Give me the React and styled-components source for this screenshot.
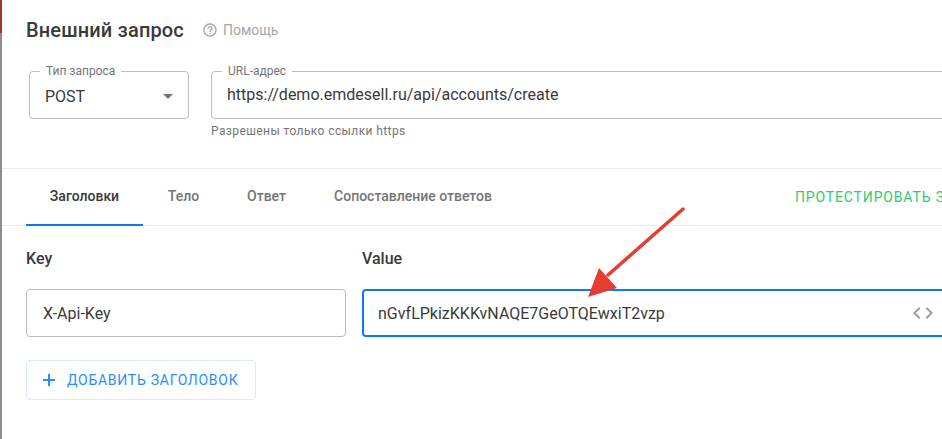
import React from 'react';
import styled, { createGlobalStyle } from 'styled-components';

const GlobalStyle = createGlobalStyle`
  html, body {
    margin: 0;
    padding: 0;
    background: #fff;
    overflow: hidden;
  }
  * { box-sizing: border-box; }
`;

const Screen = styled.div`
  position: relative;
  width: 942px;
  height: 439px;
  overflow: hidden;
  display: flex;
  font-family: Roboto, "Liberation Sans", sans-serif;
  color: #333;
  background: #fff;
`;

const Edge = styled.div`
  flex: 0 0 2px;
  background: linear-gradient(#a83232 0 33px, #8c8c8c 33px);
`;

const Panel = styled.div`
  flex: 0 0 1100px;
  display: flex;
  flex-direction: column;
`;

const Top = styled.div`
  padding: 18px 24px 0;
  height: 150px;
  border-bottom: 1px solid #ededed;
  box-sizing: content-box;
`;

const TitleRow = styled.div`
  display: flex;
  align-items: center;
  gap: 18px;
  height: 24px;
`;

const Title = styled.h1`
  margin: 0;
  font-size: 20px;
  font-weight: 500;
  letter-spacing: 0.15px;
  color: #3a3a3a;
`;

const Help = styled.span`
  display: flex;
  align-items: center;
  gap: 5px;
  font-size: 14px;
  color: #a6a6a6;
`;

const FieldRow = styled.div`
  display: flex;
  gap: 22px;
  margin: 29px 0 0 3px;
`;

const Outlined = styled.div`
  position: relative;
  width: ${(p) => p.$width}px;
  height: 48px;
  border: 1px solid #bdbdbd;
  border-radius: 4px;
  display: flex;
  align-items: center;
  justify-content: space-between;
  padding: ${(p) => (p.$raised ? '0 15px 2px' : '3px 15px 0')};
  font-size: 16px;
  color: #3a3a3a;
`;

const Legend = styled.span`
  position: absolute;
  top: -7px;
  left: 10px;
  padding: 0 6px;
  background: #fff;
  font-size: 12px;
  line-height: 13px;
  color: #757575;
`;

const Caret = styled.span`
  width: 0;
  height: 0;
  border-left: 5px solid transparent;
  border-right: 5px solid transparent;
  border-top: 5px solid #757575;
`;

const Hint = styled.div`
  margin: 5px 0 0 185px;
  font-size: 12px;
  line-height: 14px;
  letter-spacing: 0.4px;
  color: #757575;
`;

const Tabs = styled.div`
  height: 57px;
  padding: 0 24px;
  border-bottom: 1px solid #ededed;
  display: flex;
  align-items: stretch;
`;

const Tab = styled.div`
  display: flex;
  align-items: center;
  justify-content: center;
  width: ${(p) => p.$width}px;
  margin-bottom: -1px;
  padding-bottom: 1px;
  font-size: 14px;
  font-weight: 500;
  color: ${(p) => (p.$active ? '#3a3a3a' : '#757575')};
  border-bottom: 2px solid ${(p) => (p.$active ? '#0a7cf0' : 'transparent')};
`;

const TestAction = styled.div`
  margin-left: 278px;
  align-self: center;
  font-size: 14px;
  letter-spacing: 0.85px;
  color: #2ecc71;
  white-space: nowrap;
`;

const Headers = styled.div`
  padding: 24px 24px 0;
`;

const HeaderGrid = styled.div`
  display: grid;
  grid-template-columns: 320px 600px;
  column-gap: 16px;
  row-gap: 21px;
`;

const ColumnLabel = styled.div`
  font-size: 16px;
  font-weight: 500;
  line-height: 18px;
  color: #3a3a3a;
`;

const TextBox = styled.div`
  height: 48px;
  border: ${(p) => (p.$focused ? '2px solid #0a7cf0' : '1px solid #bdbdbd')};
  border-radius: 4px;
  display: flex;
  align-items: center;
  padding: 0 ${(p) => (p.$focused ? '14px' : '16px')};
  font-size: 16px;
  color: #3a3a3a;
`;

const CodeMark = styled.svg`
  margin-left: 246px;
  flex: none;
`;

const AddButton = styled.button`
  display: flex;
  align-items: center;
  gap: 11px;
  margin-top: 23px;
  height: 40px;
  width: 230px;
  padding: 0 15px;
  background: #fff;
  border: 1px solid #d6e9ff;
  border-radius: 4px;
  font-family: inherit;
  font-size: 14px;
  font-weight: 400;
  letter-spacing: 0.73px;
  white-space: nowrap;
  color: #2b8ff5;
`;

const PlusMark = styled.svg`
  flex: none;
`;

const Arrow = styled.svg`
  position: absolute;
  left: 580px;
  top: 200px;
  pointer-events: none;
`;

export default function App() {
  return (
    <>
      <GlobalStyle />
      <Screen>
        <Edge />
        <Panel>
          <Top>
            <TitleRow>
              <Title>Внешний запрос</Title>
              <Help>
                <svg width="16" height="16" viewBox="0 0 24 24" fill="#a6a6a6">
                  <path d="M11 18h2v-2h-2v2zm1-16C6.48 2 2 6.48 2 12s4.48 10 10 10 10-4.48 10-10S17.52 2 12 2zm0 18c-4.41 0-8-3.59-8-8s3.59-8 8-8 8 3.59 8 8-3.59 8-8 8zm0-14c-2.21 0-4 1.79-4 4h2c0-1.1.9-2 2-2s2 .9 2 2c0 2-3 1.75-3 5h2c0-2.25 3-2.5 3-5 0-2.21-1.79-4-4-4z" />
                </svg>
                Помощь
              </Help>
            </TitleRow>
            <FieldRow>
              <Outlined $width={160}>
                <Legend>Тип запроса</Legend>
                POST
                <Caret />
              </Outlined>
              <Outlined $width={800} $raised>
                <Legend>URL-адрес</Legend>
                https://demo.emdesell.ru/api/accounts/create
              </Outlined>
            </FieldRow>
            <Hint>Разрешены только ссылки https</Hint>
          </Top>
          <Tabs>
            <Tab $active $width={117}>Заголовки</Tab>
            <Tab $width={81}>Тело</Tab>
            <Tab $width={85}>Ответ</Tab>
            <Tab $width={208}>Сопоставление ответов</Tab>
            <TestAction>ПРОТЕСТИРОВАТЬ ЗАПРОС</TestAction>
          </Tabs>
          <Headers>
            <HeaderGrid>
              <ColumnLabel>Key</ColumnLabel>
              <ColumnLabel>Value</ColumnLabel>
              <TextBox>X-Api-Key</TextBox>
              <TextBox $focused>
                nGvfLPkizKKKvNAQE7GeOTQEwxiT2vzp
                <CodeMark width="24" height="24" viewBox="0 0 24 24" fill="#9e9e9e">
                  <path d="M9.4 16.6 4.8 12l4.6-4.6L8 6l-6 6 6 6 1.4-1.4zm5.2 0 4.6-4.6-4.6-4.6L16 6l6 6-6 6-1.4-1.4z" />
                </CodeMark>
              </TextBox>
            </HeaderGrid>
            <AddButton>
              <PlusMark width="14" height="14" viewBox="0 0 14 14" fill="#2b8ff5">
                <path d="M1 6h5V1h2v5h5v2H8v5H6V8H1z" />
              </PlusMark>
              ДОБАВИТЬ ЗАГОЛОВОК
            </AddButton>
          </Headers>
        </Panel>
        <Arrow width="110" height="100" viewBox="0 0 110 100">
          <path d="M103 9 28 75" stroke="#e53d30" strokeWidth="3.5" strokeLinecap="round" fill="none" />
          <path d="M8 97 L19 68 L37 88 Z" fill="#e53d30" />
        </Arrow>
      </Screen>
    </>
  );
}
